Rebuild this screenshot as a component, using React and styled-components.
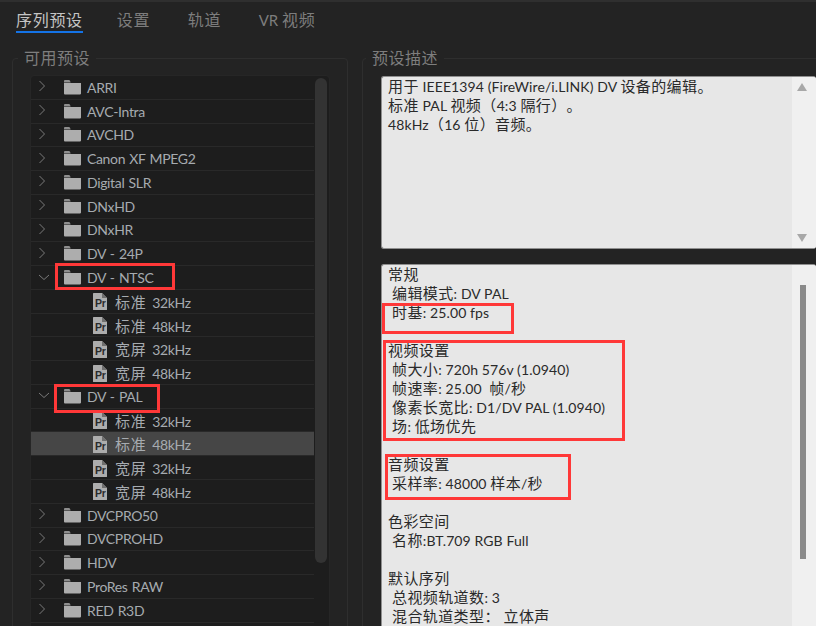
import React from "react";
import styled, { createGlobalStyle } from "styled-components";

const Global = createGlobalStyle`
  html, body { margin: 0; padding: 0; background: #232323; }
  * { box-sizing: border-box; }
`;

const FONT = `Lato, "Noto Sans CJK SC", sans-serif`;

const Page = styled.div`
  position: relative; width: 816px; height: 626px; overflow: hidden;
  background: #232323; font-family: ${FONT}; border-top: 2px solid #2f2f2f;
  text-spacing-trim: space-all;
`;
const TabBar = styled.div`
  display: flex; gap: 34px; padding: 7px 0 0 16px; height: 31px;
`;
const Tab = styled.div`
  --cjk: 16px; --cjk-ls: 0.7px;
  height: 24px; font-size: 15px; line-height: 21px; white-space: nowrap;
  margin-right: ${p => (p.$active ? 0 : 3.5)}px;
  color: ${p => (p.$active ? "#c4c4c4" : "#7d7d7d")};
  border-bottom: 2px solid ${p => (p.$active ? "#1473e6" : "transparent")};
`;
const Columns = styled.div`
  display: flex; gap: 14px; padding: 13px 0 0 12px; height: 593px;
`;
const Group = styled.fieldset`
  margin: 0; min-width: 0; border: 1px solid #2e2e2e; border-radius: 4px;
  padding: 6px 0 0 18px; height: 700px; flex: none; width: ${p => p.$w}px;
`;
const Legend = styled.legend`
  --cjk: 16px; --cjk-ls: 0.5px;
  margin-left: ${p => p.$shift}px; padding: 0 6px; font-size: 15px; line-height: 24px; color: #7e7e7e;
`;
const TreeBox = styled.div`
  display: flex; width: 298px; height: 600px; background: #1d1d1d; border-radius: 3px;
  outline: 1px solid #262626;
`;
const Tree = styled.div`
  width: 283px; flex: none;
`;
const Row = styled.div`
  --cjk: 15px; --cjk-ls: 0.7px; --cjk-gap: 1.5px;
  display: flex; align-items: center; height: 23.77px;
  padding-left: ${p => (p.$child ? 61 : 5)}px;
  background: ${p => (p.$sel ? "#464646" : "transparent")};
  border-bottom: 1px solid #292929;
  color: #a6abb0; font-size: 14px; letter-spacing: -0.35px; word-spacing: 1px; white-space: nowrap;
`;
const Chevron = styled.svg`
  width: 14px; height: 12px; flex: none; margin-right: 13px; margin-top: -2px;
`;
const FolderSvg = styled.svg`
  width: 19px; height: 16px; flex: none; margin-right: 5px; margin-top: -1px;
`;
const FileSvg = styled.svg`
  width: 16px; height: 19px; flex: none; margin-right: 7px; margin-top: 1px;
`;
const TreeScroll = styled.div`
  flex: 1; padding: 2px 2px 0 1px;
`;
const TreeThumb = styled.div`
  height: 485px; background: #333333; border-radius: 6px;
`;
const Stack = styled.div`
  display: flex; flex-direction: column; gap: 15px; width: 435px;
`;
const TextBox = styled.div`
  display: flex; height: ${p => p.$h}px; background: #e7e7e7; border: 1px solid #8f8f8f;
  border-right: 0; border-radius: 3px; overflow: hidden;
`;
const TextBody = styled.div`
  --cjk: 15px; --cjk-ls: 0.4px;
  flex: 1; padding: 0 0 0 6px; font-size: 14px; letter-spacing: 0.1px;
  line-height: 19px; color: #2a2a2a; white-space: pre;
`;
const Line = styled.div`
  height: 19px; padding-left: ${p => (p.$indent ? 4 : 0)}px;
`;
const Rail = styled.div`
  width: 24px; flex: none; background: #f0f0f0;
  display: flex; flex-direction: column; justify-content: space-between; align-items: center; padding: 6px 4px 6px 0;
`;
const Arrow = styled.div`
  width: 0; height: 0; border-left: 5px solid transparent; border-right: 5px solid transparent;
  ${p => (p.$down ? "border-top: 8px solid #a8a8a8;" : "border-bottom: 8px solid #a8a8a8;")}
`;
const RailThumb = styled.div`
  width: 6px; height: 274px; background: #8a8a8a; margin: 14px 0 0 8px; align-self: flex-start;
`;
const Cjk = styled.span`
  font-size: var(--cjk); letter-spacing: var(--cjk-ls); margin-right: var(--cjk-gap, 0);
`;
const Mark = styled.div`
  position: absolute; border: 3px solid #ff3838; pointer-events: none;
  left: ${p => p.$x}px; top: ${p => p.$y}px; width: ${p => p.$w}px; height: ${p => p.$h}px;
`;

const Mixed = ({ children }) => (
  <span>
    {String(children)
      .split(/([\u3000-\u9fff\uff00-\uffef]+)/)
      .map((s, i) => (i % 2 ? <Cjk key={i}>{s}</Cjk> : s))}
  </span>
);

const Folder = () => (
  <FolderSvg viewBox="0 0 19 16">
    <path d="M1 3.5V2.2C1 1.5 1.5 1 2.2 1h3.6c.7 0 1 .4 1.3 1l.5 1.5z" fill="#8e8e8e" />
    <path d="M1 4h17v10.6c0 .5-.4.9-.9.9H1.9c-.5 0-.9-.4-.9-.9z" fill="#adadad" />
  </FolderSvg>
);
const PrFile = () => (
  <FileSvg viewBox="0 0 16 19">
    <path d="M1 1.6C1 1.2 1.2 1 1.6 1H10l5 5v11.4c0 .4-.2.6-.6.6H1.6c-.4 0-.6-.2-.6-.6z" fill="#adadad" />
    <path d="M10 1l5 5h-5z" fill="#6f6f6f" />
    <text x="3" y="14.6" fontFamily="Liberation Sans, sans-serif" fontWeight="700" fontSize="10.5" fill="#2a2a2a">Pr</text>
  </FileSvg>
);
const Toggle = ({ open }) => (
  <Chevron viewBox="0 0 14 12" fill="none" stroke="#7a7a7a" strokeWidth="1">
    <path d={open ? "M3 4l5 4.5L13 4" : "M3.5 1l5 5-5 5"} />
  </Chevron>
);

const tree = [
  ["ARRI"], ["AVC-Intra"], ["AVCHD"], ["Canon XF MPEG2"], ["Digital SLR"], ["DNxHD"], ["DNxHR"], ["DV - 24P"],
  ["DV - NTSC", ["标准 32kHz", "标准 48kHz", "宽屏 32kHz", "宽屏 48kHz"]],
  ["DV - PAL", ["标准 32kHz", "标准 48kHz", "宽屏 32kHz", "宽屏 48kHz"], 1],
  ["DVCPRO50"], ["DVCPROHD"], ["HDV"], ["ProRes RAW"], ["RED R3D"],
];

const desc = ["用于 IEEE1394 (FireWire/i.LINK) DV 设备的编辑。", "标准 PAL 视频（4:3 隔行）。", "48kHz（16 位）音频。"];
const info = [
  "常规", " 编辑模式: DV PAL", " 时基: 25.00 fps", "",
  "视频设置", " 帧大小: 720h 576v (1.0940)", " 帧速率: 25.00  帧/秒", " 像素长宽比: D1/DV PAL (1.0940)", " 场: 低场优先", "",
  "音频设置", " 采样率: 48000 样本/秒", "",
  "色彩空间", " 名称:BT.709 RGB Full", "",
  "默认序列", " 总视频轨道数: 3", " 混合轨道类型： 立体声",
];
const marks = [
  [55, 263, 120, 27], [54, 384, 106, 29], [382, 303, 132, 31], [383, 340, 242, 101], [385, 454, 186, 46],
];

export default function App() {
  return (
    <Page>
      <Global />
      <TabBar>
        <Tab $active><Mixed>序列预设</Mixed></Tab>
        <Tab><Mixed>设置</Mixed></Tab>
        <Tab><Mixed>轨道</Mixed></Tab>
        <Tab><Mixed>VR 视频</Mixed></Tab>
      </TabBar>
      <Columns>
        <Group $w={336}>
          <Legend $shift={-13}><Mixed>可用预设</Mixed></Legend>
          <TreeBox>
            <Tree>
              {tree.map(([name, kids, selIdx]) => (
                <React.Fragment key={name}>
                  <Row>
                    <Toggle open={!!kids} />
                    <Folder />
                    {name}
                  </Row>
                  {kids && kids.map((k, i) => (
                    <Row key={k} $child $sel={selIdx === i}>
                      <PrFile />
                      <Mixed>{k}</Mixed>
                    </Row>
                  ))}
                </React.Fragment>
              ))}
            </Tree>
            <TreeScroll><TreeThumb /></TreeScroll>
          </TreeBox>
        </Group>
        <Group $w={470}>
          <Legend $shift={-15}><Mixed>预设描述</Mixed></Legend>
          <Stack>
            <TextBox $h={173}>
              <TextBody>{desc.map(t => <Line key={t}><Mixed>{t}</Mixed></Line>)}</TextBody>
              <Rail><Arrow /><Arrow $down /></Rail>
            </TextBox>
            <TextBox $h={380}>
              <TextBody>{info.map((t, i) => <Line key={i} $indent={t.startsWith(" ")}><Mixed>{t.trim()}</Mixed></Line>)}</TextBody>
              <Rail><RailThumb /></Rail>
            </TextBox>
          </Stack>
        </Group>
      </Columns>
      {marks.map(([x, y, w, h]) => <Mark key={x} $x={x} $y={y - 2} $w={w} $h={h} />)}
    </Page>
  );
}
